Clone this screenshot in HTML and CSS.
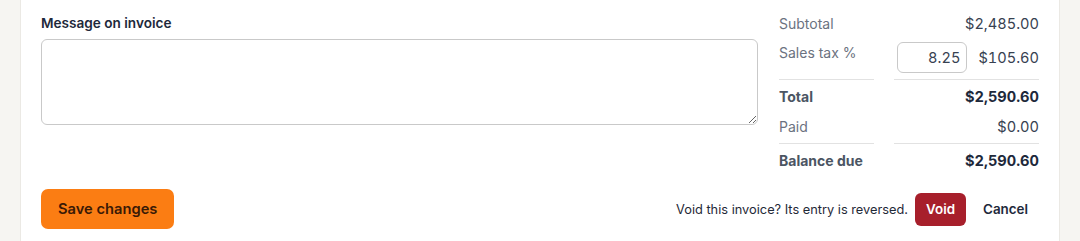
FILE: index.html
```html
<!DOCTYPE html>
<html lang="en">
<head>
    <meta charset="UTF-8">
    <meta name="viewport" content="width=device-width, initial-scale=1.0">
    <title>Invoice</title>
    <link rel="stylesheet" href="styles.css">
</head>
<body>

<div class="card">
  <div class="main">
    <div class="message">
      <label for="messageInput">Message on invoice</label>
      <textarea id="messageInput"></textarea>
    </div>

    <div class="summary">
      <div class="lbl">Subtotal</div>
      <div class="val">$2,485.00</div>

      <div class="lbl tax-lbl">Sales tax %</div>
      <div class="val tax-val">
        <input type="text" class="tax-input" value="8.25">
        <span>$105.60</span>
      </div>

      <div class="lbl strong sep first-sep">Total</div>
      <div class="val strong sep first-sep">$2,590.60</div>

      <div class="lbl paid">Paid</div>
      <div class="val paid">$0.00</div>

      <div class="lbl strong sep second-sep">Balance due</div>
      <div class="val strong sep second-sep">$2,590.60</div>
    </div>
  </div>

  <div class="footer">
    <button class="btn-save">Save changes</button>
    <div class="void-box">
      <span class="void-text">Void this invoice? Its entry is reversed.</span>
      <button class="btn-void">Void</button>
      <button class="btn-cancel">Cancel</button>
    </div>
  </div>
</div>

</body>
</html>
```

FILE: styles.css
```css
body {
  margin: 0;
  background-color: #f6f5f2;
  font-family: Inter, "Noto Sans", Arial, sans-serif;
  color: #1e293b;
}

.card {
  margin: 0 20px;
  height: 241px;
  box-sizing: border-box;
  padding: 13px 20px 0 20px;
  background-color: #fff;
  border-left: 1px solid #ebe9e4;
  border-right: 1px solid #ebe9e4;
}

.main {
  display: flex;
  gap: 21px;
}

.message {
  flex: 1;
  display: flex;
  flex-direction: column;
}

.message label {
  font-size: 13.6px;
  line-height: 20px;
  font-weight: 600;
  color: #1e293b;
}

.message textarea {
  margin-top: 6px;
  height: 86px;
  box-sizing: border-box;
  border: 1px solid #c9c9c9;
  border-radius: 6px;
  font-family: inherit;
  font-size: 14px;
}

.summary {
  width: 260px;
  margin-top: 1px;
  display: grid;
  grid-template-columns: 95px 145px;
  column-gap: 20px;
  font-size: 14px;
  line-height: 20px;
}

.lbl {
  color: #6b7280;
}

.val {
  text-align: right;
  color: #374151;
  font-size: 14.6px;
  font-variant-numeric: tabular-nums;
}

.tax-lbl {
  margin-top: 8px;
  padding-top: 1px;
}

.tax-val {
  margin-top: 8px;
  display: flex;
  justify-content: flex-end;
  align-items: center;
  gap: 11px;
}

.tax-input {
  width: 70px;
  height: 31px;
  box-sizing: border-box;
  border: 1px solid #c9c9c9;
  border-radius: 6px;
  text-align: right;
  padding: 0 6px;
  font-family: inherit;
  font-size: 14.6px;
  font-variant-numeric: tabular-nums;
  color: #374151;
}

.sep {
  border-top: 1px solid #e2e2e2;
  padding-top: 7px;
}

.first-sep {
  margin-top: 6px;
}

.second-sep {
  margin-top: 6px;
}

.paid {
  margin-top: 10px;
}

.lbl.strong {
  font-weight: 700;
  color: #4b5563;
}

.val.strong {
  font-weight: 700;
  color: #1e293b;
}

.footer {
  margin-top: 18px;
  display: flex;
  justify-content: space-between;
  align-items: center;
}

.btn-save {
  height: 40px;
  padding: 0 17px;
  border: none;
  border-radius: 7px;
  background-color: #fb7d13;
  color: #3a1a06;
  font-family: inherit;
  font-size: 14.7px;
  font-weight: 600;
}

.void-box {
  display: flex;
  align-items: center;
}

.void-text {
  font-size: 12.8px;
  color: #1f2937;
}

.btn-void {
  margin-left: 7px;
  height: 33px;
  padding: 0 11px;
  border: none;
  border-radius: 6px;
  background-color: #a71f2b;
  color: #fff;
  font-family: inherit;
  font-size: 13.4px;
  font-weight: 600;
}

.btn-cancel {
  margin-left: 6px;
  height: 33px;
  padding: 0 11px;
  border: none;
  background: none;
  color: #1e293b;
  font-family: inherit;
  font-size: 13.4px;
  font-weight: 600;
}
```
